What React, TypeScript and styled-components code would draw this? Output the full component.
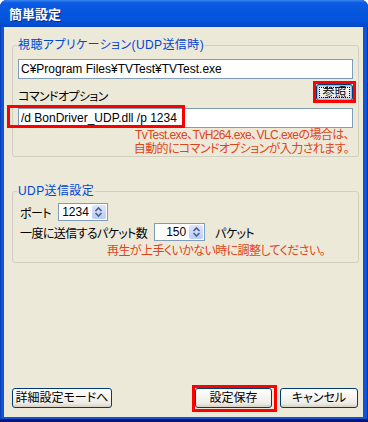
import React from 'react';
import styled, { createGlobalStyle } from 'styled-components';

const GlobalStyle = createGlobalStyle`
  html, body {
    margin: 0;
    padding: 0;
    background: #fff;
  }
  body {
    font-family: "Liberation Sans", "Noto Sans CJK JP", sans-serif;
    font-size: 12px;
    font-feature-settings: "palt";
    letter-spacing: -0.6px;
    color: #000;
  }
  * {
    box-sizing: border-box;
  }
`;

const Window = styled.div`
  width: 368px;
  height: 422px;
  display: flex;
  flex-direction: column;
  background: #0C54D8;
  border-radius: 7px 7px 0 0;
  box-shadow: inset 0 -3px 0 #00177A, inset -1px 0 0 #0030A8, inset 1px 0 0 #0A3FB8;
  overflow: hidden;
`;

const TitleBar = styled.div`
  height: 27px;
  flex: none;
  display: flex;
  align-items: center;
  padding: 0 9px;
  background: linear-gradient(#3A87F0 0%, #0D5BE2 10%, #0656DE 45%, #0452D8 80%, #0547C4 100%);
  color: #fff;
  font: bold 13px "Noto Sans CJK JP", sans-serif;
  letter-spacing: 0;
  text-shadow: 1px 1px 0 #0A2A80;
`;

const Body = styled.div`
  flex: 1;
  margin: 0 5px 5px 4px;
  background: #ECE9D8;
  display: flex;
  flex-direction: column;
  padding: 11px 4px 9px 8px;
`;

const Group = styled.fieldset<{ $gap?: number; $pb?: number }>`
  margin: ${p => p.$gap ?? 0}px 0 0;
  padding: 0 5px ${p => p.$pb ?? 0}px;
  border: 1px solid #D0D0BF;
  border-radius: 3px;
  min-width: 0;
`;

const Legend = styled.legend`
  padding: 0 1px;
  margin-left: -1px;
  color: #0046D5;
  line-height: 14px;
  letter-spacing: 0.4px;
`;

const TextBox = styled.input<{ $gap?: number }>`
  display: block;
  width: 100%;
  height: 20px;
  margin: ${p => p.$gap ?? 0}px 0 0;
  padding: 0 2px;
  border: 1px solid #7F9DB9;
  background: #fff;
  font: inherit;
  letter-spacing: 0;
  color: #000;
  outline: none;
`;

const OptionRow = styled.div`
  display: flex;
  justify-content: space-between;
  align-items: flex-end;
  margin-top: 5px;
`;

const FieldLabel = styled.span`
  line-height: 14px;
  margin-bottom: -3px;
`;

const Button = styled.button<{ $w: number; $h?: number; $focus?: boolean }>`
  width: ${p => p.$w}px;
  height: ${p => p.$h ?? 20}px;
  padding: 0;
  border: 1px solid #003C74;
  border-radius: 3px;
  background: linear-gradient(#FFFFFF 0%, #F6F5F0 45%, #ECEBE4 80%, #D6D0C5 100%);
  font: inherit;
  line-height: 1;
  color: #000;
  box-shadow: ${p => (p.$focus ? 'inset 0 0 0 1px #98B8EA, inset 0 0 0 2px #C6D6F6' : 'none')};
  outline: ${p => (p.$focus ? '1px dotted #000' : 'none')};
  outline-offset: -4px;
`;

const Highlight = styled.span<{ $inset: string }>`
  position: relative;
  display: inline-flex;

  &::after {
    content: '';
    position: absolute;
    inset: ${p => p.$inset};
    border: 3px solid #F00;
    pointer-events: none;
  }
`;

const BoxWrap = styled.div`
  position: relative;
  margin-top: 7px;
`;

const BoxMark = styled.span`
  position: absolute;
  left: -11px;
  top: -3px;
  width: 178px;
  height: 23px;
  border: 3px solid #F00;
  pointer-events: none;
`;

const Note = styled.div<{ $gap?: number; $pr: number; $lh?: number }>`
  margin-top: ${p => p.$gap ?? 0}px;
  padding-right: ${p => p.$pr}px;
  text-align: right;
  color: #E0441B;
  line-height: ${p => p.$lh ?? 15}px;
`;

const SpinRow = styled.div<{ $gap: number }>`
  display: flex;
  align-items: center;
  gap: 7px;
  margin: ${p => p.$gap}px 0 0 2px;
`;

const Spin = styled.div<{ $w: number }>`
  width: ${p => p.$w}px;
  height: 18px;
  display: flex;
  border: 1px solid #7F9DB9;
  background: #fff;
`;

const SpinValue = styled.span`
  flex: 1;
  text-align: right;
  padding-right: 3px;
  line-height: 16px;
  letter-spacing: 0;
`;

const SpinButton = styled.span`
  width: 14px;
  margin: 1px 1px 1px 0;
  display: flex;
  align-items: center;
  justify-content: center;
  border-radius: 2px;
  background: linear-gradient(#DCE6FD, #B9CCF8);
`;

const Unit = styled.span`
  margin-left: 3px;
`;

const ButtonRow = styled.div`
  margin-top: auto;
  display: flex;
  align-items: center;
  gap: 8px;
  padding-right: 1px;
`;

const Spacer = styled.div`
  flex: 1;
`;

const SpinArrows = () => (
  <svg width="9" height="12" viewBox="0 0 9 12">
    <path d="M1.5 5 L4.5 2 L7.5 5 M1.5 7 L4.5 10 L7.5 7" fill="none" stroke="#4D6185" strokeWidth="1.6" />
  </svg>
);

const SpinBox = ({ value, width }: { value: string; width: number }) => (
  <Spin $w={width}>
    <SpinValue>{value}</SpinValue>
    <SpinButton>
      <SpinArrows />
    </SpinButton>
  </Spin>
);

export default function App() {
  return (
    <>
      <GlobalStyle />
      <Window>
        <TitleBar>簡単設定</TitleBar>
        <Body>
          <Group>
            <Legend>視聴アプリケーション(UDP送信時)</Legend>
            <TextBox $gap={7} readOnly value="C¥Program Files¥TVTest¥TVTest.exe" />
            <OptionRow>
              <FieldLabel>コマンドオプション</FieldLabel>
              <Highlight $inset="-3px -3px -2px -3px">
                <Button $w={37} $h={17} $focus>参照</Button>
              </Highlight>
            </OptionRow>
            <BoxWrap>
              <TextBox readOnly value="/d BonDriver_UDP.dll /p 1234" />
              <BoxMark />
            </BoxWrap>
            <Note $gap={0} $pr={4} $lh={14}>
              TvTest.exe、TvH264.exe、VLC.exeの場合は、
              <br />
              自動的にコマンドオプションが入力されます。
            </Note>
          </Group>
          <Group $gap={27} $pb={3}>
            <Legend>UDP送信設定</Legend>
            <SpinRow $gap={5}>
              <span>ポート</span>
              <SpinBox value="1234" width={50} />
            </SpinRow>
            <SpinRow $gap={2}>
              <span>一度に送信するパケット数</span>
              <SpinBox value="150" width={51} />
              <Unit>パケット</Unit>
            </SpinRow>
            <Note $gap={3} $pr={28}>再生が上手くいかない時に調整してください。</Note>
          </Group>
          <ButtonRow>
            <Button $w={100}>詳細設定モードへ</Button>
            <Spacer />
            <Highlight $inset="-3px -5px -4px -3px">
              <Button $w={77}>設定保存</Button>
            </Highlight>
            <Button $w={78}>キャンセル</Button>
          </ButtonRow>
        </Body>
      </Window>
    </>
  );
}
